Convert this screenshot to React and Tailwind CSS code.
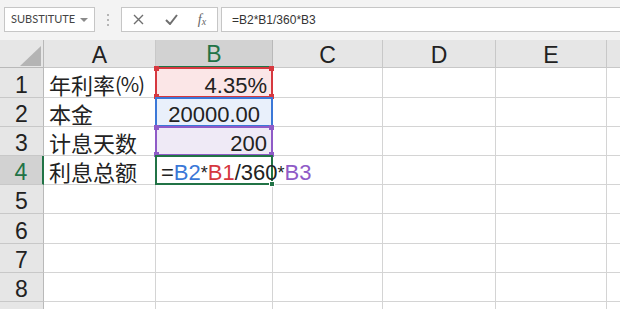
import React from "react";

const FONT = { fontFamily: '"Liberation Sans", "Noto Sans CJK SC", sans-serif' };
const CJK = { fontFamily: '"Noto Sans CJK SC", "Liberation Sans", sans-serif' };

function Corner({ pos, color }) {
  const p = {
    tl: "-left-[3px] -top-[3px]",
    tr: "-right-[3px] -top-[3px]",
    bl: "-left-[3px] -bottom-[3px]",
    br: "-right-[3px] -bottom-[3px]",
  }[pos];
  return <div className={`absolute w-[5px] h-[5px] ${p} ${color}`} />;
}

function RowHead({ n, h, active }) {
  return (
    <div
      className={`w-[44px] shrink-0 flex items-end justify-center border-b border-[#c8c8c8] ${h} ${
        active ? "bg-[#d2d2d2] text-[#217346] border-r-2 border-r-[#217346]" : "bg-[#e6e6e6] text-[#222] border-r border-r-[#b9b9b9]"
      }`}
    >
      <span className="text-[23px] leading-none">{n}</span>
    </div>
  );
}

function Plain({ w }) {
  return <div className={`${w} shrink-0 border-r border-b border-[#d4d4d4]`} />;
}

export default function App() {
  const heights = ["h-[30px]", "h-[29px]", "h-[29px]", "h-[29px]", "h-[29px]", "h-[30px]", "h-[29px]", "h-[29px]", "h-[29px]"];
  return (
    <div className="w-[620px] h-[309px] overflow-hidden bg-[#f3f3f3] text-[#222]" style={FONT}>
      {/* toolbar */}
      <div className="h-[40px] flex items-start pt-[7px] pl-[4px]">
        <div className="w-[91px] h-[25px] bg-white border border-[#c6c6c6] flex items-center pl-[6px] pr-[6px]">
          <span className="text-[11px] text-[#444] flex-1 whitespace-nowrap" style={{ fontFamily: "Lato, sans-serif" }}>
            SUBSTITUTE
          </span>
          <div className="w-0 h-0 border-l-[4px] border-r-[4px] border-t-[4px] border-l-transparent border-r-transparent border-t-[#8a8a8a]" />
        </div>
        <div className="w-[26px] h-[25px] flex flex-col items-center justify-center gap-[3px]">
          <div className="w-[2px] h-[2px] bg-[#b5b5b5]" />
          <div className="w-[2px] h-[2px] bg-[#b5b5b5]" />
          <div className="w-[2px] h-[2px] bg-[#b5b5b5]" />
        </div>
        <div className="w-[97px] h-[25px] bg-white border border-[#c6c6c6] flex items-center">
          <div className="w-[33px] flex justify-center">
            <svg width="11" height="11" viewBox="0 0 11 11">
              <path d="M1 1 L10 10 M10 1 L1 10" stroke="#6f6f6f" strokeWidth="1.4" fill="none" />
            </svg>
          </div>
          <div className="w-[32px] flex justify-center">
            <svg width="13" height="11" viewBox="0 0 13 11">
              <path d="M1 6 L5 10 L12 1" stroke="#6f6f6f" strokeWidth="2" fill="none" />
            </svg>
          </div>
          <div className="w-[30px] flex justify-center text-[#666] italic" style={{ fontFamily: '"Liberation Serif", serif' }}>
            <span className="text-[14px] leading-none">f</span>
            <span className="text-[10px] leading-none mt-[4px]">x</span>
          </div>
        </div>
        <div className="ml-[3px] flex-1 h-[25px] bg-white border border-[#c6c6c6] border-r-0 flex items-center pl-[10px]">
          <span className="text-[12px] text-[#333]">=B2*B1/360*B3</span>
        </div>
      </div>

      {/* sheet */}
      <div className="bg-white">
        {/* column header */}
        <div className="flex h-[28px] bg-[#e6e6e6]">
          <div className="w-[44px] shrink-0 relative border-r border-b border-[#b9b9b9]">
            <svg className="absolute left-0 top-0" width="44" height="28" viewBox="0 0 44 28">
              <polygon points="20,26 41,26 41,6" fill="#b4b4b4" />
            </svg>
          </div>
          <div className="w-[112px] shrink-0 flex items-end justify-center border-r border-b border-[#c8c8c8]">
            <span className="text-[23px] leading-none">A</span>
          </div>
          <div className="w-[117px] shrink-0 flex items-end justify-center bg-[#d2d2d2] border-r border-r-[#b9b9b9] border-b-2 border-b-[#217346] text-[#217346]">
            <span className="text-[23px] leading-none">B</span>
          </div>
          <div className="w-[110px] shrink-0 flex items-end justify-center border-r border-b border-[#c8c8c8]">
            <span className="text-[23px] leading-none">C</span>
          </div>
          <div className="w-[113px] shrink-0 flex items-end justify-center border-r border-b border-[#c8c8c8]">
            <span className="text-[23px] leading-none">D</span>
          </div>
          <div className="w-[111px] shrink-0 flex items-end justify-center border-r border-b border-[#c8c8c8]">
            <span className="text-[23px] leading-none">E</span>
          </div>
          <div className="flex-1 border-b border-[#c8c8c8]" />
        </div>

        {/* row 1 */}
        <div className={`flex ${heights[0]}`}>
          <RowHead n="1" h={heights[0]} />
          <div className="w-[112px] shrink-0 border-r border-b border-[#d4d4d4] flex items-end pl-[5px]" style={CJK}>
            <span className="text-[22px] leading-none pb-[2px]">年利率</span>
            <span className="text-[20px] leading-none pb-[3px] tracking-[-1px]">(%)</span>
          </div>
          <div className="w-[117px] shrink-0 border-r border-b border-[#d4d4d4] bg-[#fbe6e7] relative flex items-end justify-end pr-[5px]">
            <span className="text-[22px] leading-none">4.35%</span>
            <div className="absolute -left-[1px] -top-[1px] -right-[1px] -bottom-[1px] border-2 border-[#d6383f]">
              <Corner pos="tl" color="bg-[#d6383f]" />
              <Corner pos="tr" color="bg-[#d6383f]" />
              <Corner pos="bl" color="bg-[#d6383f]" />
              <Corner pos="br" color="bg-[#d6383f]" />
            </div>
          </div>
          <Plain w="w-[110px]" />
          <Plain w="w-[113px]" />
          <Plain w="w-[111px]" />
          <div className="flex-1 border-b border-[#d4d4d4]" />
        </div>

        {/* row 2 */}
        <div className={`flex ${heights[1]}`}>
          <RowHead n="2" h={heights[1]} />
          <div className="w-[112px] shrink-0 border-r border-b border-[#d4d4d4] flex items-end pl-[5px]" style={CJK}>
            <span className="text-[22px] leading-none pb-[2px]">本金</span>
          </div>
          <div className="w-[117px] shrink-0 border-r border-b border-[#d4d4d4] bg-[#e9f0fb] relative flex items-end justify-end pr-[12px]">
            <div className="absolute -left-[1px] -top-[1px] -right-[1px] -bottom-[1px] border-2 border-[#3b78d8]" />
            <span className="text-[22px] leading-none relative">20000.00</span>
          </div>
          <Plain w="w-[110px]" />
          <Plain w="w-[113px]" />
          <Plain w="w-[111px]" />
          <div className="flex-1 border-b border-[#d4d4d4]" />
        </div>

        {/* row 3 */}
        <div className={`flex ${heights[2]}`}>
          <RowHead n="3" h={heights[2]} />
          <div className="w-[112px] shrink-0 border-r border-b border-[#d4d4d4] flex items-end pl-[5px]" style={CJK}>
            <span className="text-[22px] leading-none pb-[2px]">计息天数</span>
          </div>
          <div className="w-[117px] shrink-0 border-r border-b border-[#d4d4d4] bg-[#efeaf6] relative flex items-end justify-end pr-[5px]">
            <span className="text-[22px] leading-none">200</span>
            <div className="absolute -left-[1px] -top-[1px] -right-[1px] -bottom-[1px] border-2 border-[#8f5bc7]">
              <Corner pos="tl" color="bg-[#8f5bc7]" />
              <Corner pos="tr" color="bg-[#8f5bc7]" />
              <Corner pos="bl" color="bg-[#8f5bc7]" />
              <Corner pos="br" color="bg-[#8f5bc7]" />
            </div>
          </div>
          <Plain w="w-[110px]" />
          <Plain w="w-[113px]" />
          <Plain w="w-[111px]" />
          <div className="flex-1 border-b border-[#d4d4d4]" />
        </div>

        {/* row 4 */}
        <div className={`flex ${heights[3]}`}>
          <RowHead n="4" h={heights[3]} active />
          <div className="w-[112px] shrink-0 border-r border-b border-[#d4d4d4] flex items-end pl-[5px]" style={CJK}>
            <span className="text-[22px] leading-none pb-[2px]">利息总额</span>
          </div>
          <div className="w-[117px] shrink-0 border-r border-b border-[#d4d4d4] relative z-10">
            <div className="absolute -left-[1px] -top-[1px] -right-[1px] -bottom-[1px] border-2 border-[#217346]">
              <div className="absolute -right-[4px] -bottom-[4px] w-[6px] h-[6px] bg-[#217346] border border-white" />
            </div>
            <div className="absolute left-[5px] bottom-0 whitespace-nowrap text-[22px] leading-none">
              =<span className="text-[#3b78d8]">B2</span>
              <span className="text-[18px] relative -top-[1px]">*</span>
              <span className="text-[#d6383f]">B1</span>/360
              <span className="text-[18px] relative -top-[1px]">*</span>
              <span className="text-[#8f5bc7]">B3</span>
            </div>
          </div>
          <div className="w-[110px] shrink-0 border-r border-b border-[#d4d4d4]" />
          <Plain w="w-[113px]" />
          <Plain w="w-[111px]" />
          <div className="flex-1 border-b border-[#d4d4d4]" />
        </div>

        {/* rows 5-9 */}
        {[5, 6, 7, 8, 9].map((n) => (
          <div key={n} className={`flex ${heights[n - 1]}`}>
            <RowHead n={n < 9 ? String(n) : ""} h={heights[n - 1]} />
            <Plain w="w-[112px]" />
            <Plain w="w-[117px]" />
            <Plain w="w-[110px]" />
            <Plain w="w-[113px]" />
            <Plain w="w-[111px]" />
            <div className="flex-1 border-b border-[#d4d4d4]" />
          </div>
        ))}
      </div>
    </div>
  );
}
